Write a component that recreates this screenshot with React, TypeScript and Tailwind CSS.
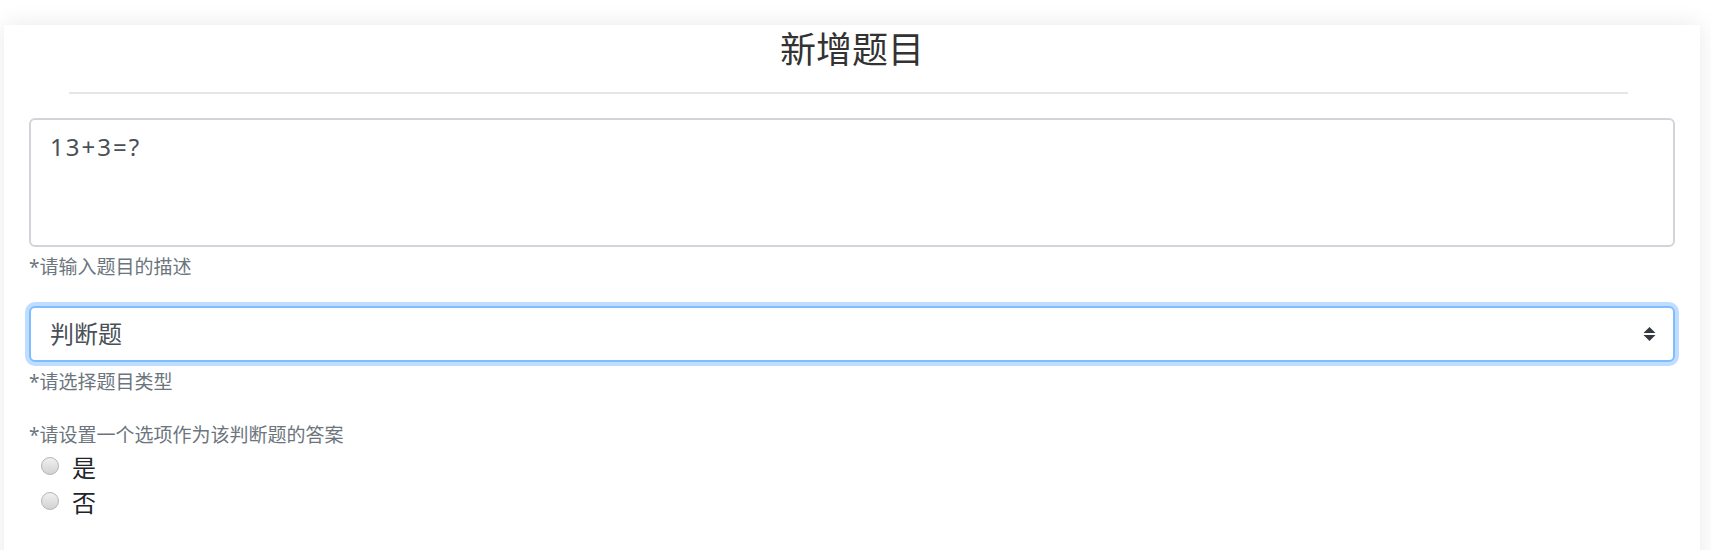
import React, { useState } from 'react';

const FONT = "font-['Noto_Sans','Noto_Sans_CJK_SC',sans-serif]";

const Radio: React.FC<{ label: string; checked: boolean; onChange: () => void }> = ({ label, checked, onChange }) => (
  <label className="flex items-center h-[35px] cursor-pointer">
    <span
      onClick={onChange}
      className="w-[18px] h-[18px] mb-[6px] rounded-full border border-[#b5b5b5] bg-gradient-to-b from-[#f0f0f0] to-[#d2d2d2] flex items-center justify-center mr-[13px]"
    >
      {checked && <span className="w-[8px] h-[8px] rounded-full bg-[#333]" />}
    </span>
    <span className="text-[24px] text-[#212529] leading-[35px] -mt-[2px]">{label}</span>
  </label>
);

export default function App() {
  const [desc, setDesc] = useState('13+3=?');
  const [type, setType] = useState('判断题');
  const [answer, setAnswer] = useState<string | null>(null);

  return (
    <div className={`min-h-[550px] bg-white pt-[25px] pl-[4px] pr-[11px] ${FONT}`}>
      <div className="bg-white shadow-[0_0_22px_rgba(0,0,0,0.09)] px-[25px] pb-[80px]">
        {/* Header */}
        <h4 className="text-center text-[36px] leading-[43px] pt-[3px] text-[#333] font-normal">新增题目</h4>
        <div className="ml-[40px] mr-[47px] mt-[21px] border-t-2 border-[#e6e6e6]" />

        {/* Description */}
        <div className="mt-[24px] mb-[24px]">
          <textarea
            rows={3}
            value={desc}
            onChange={(e) => setDesc(e.target.value)}
            className="block w-full h-[129px] resize-none border-2 border-[#d1d5da] rounded-[6px] px-[19px] py-[9px] text-[24px] leading-[36px] tracking-[2px] text-[#495057] outline-none"
          />
          <div className="mt-[6px] text-[19px] leading-[29px] text-[#6c757d]">*请输入题目的描述</div>
        </div>

        {/* Type */}
        <div className="mb-[24px]">
          <div className="relative">
            <select
              value={type}
              onChange={(e) => setType(e.target.value)}
              className="appearance-none block w-full h-[56px] border-2 border-[#80bdff] rounded-[6px] px-[19px] text-[24px] text-[#495057] bg-white outline-none shadow-[0_0_0_4px_rgba(0,123,255,0.25)]"
            >
              <option>单选题</option>
              <option>多选题</option>
              <option>判断题</option>
            </select>
            <svg className="absolute right-[19px] top-[21px] pointer-events-none" width="13" height="14" viewBox="0 0 13 14">
              <path d="M6.5 0 L12.5 6 L0.5 6 Z" fill="#343a40" />
              <path d="M6.5 14 L12.5 8 L0.5 8 Z" fill="#343a40" />
            </svg>
          </div>
          <div className="mt-[6px] text-[19px] leading-[29px] text-[#6c757d]">*请选择题目类型</div>
        </div>

        {/* Answer */}
        <div>
          <div className="text-[19px] leading-[29px] text-[#6c757d]">*请设置一个选项作为该判断题的答案</div>
          <div className="pl-[12px] pt-[1px]">
            <Radio label="是" checked={answer === '是'} onChange={() => setAnswer('是')} />
            <Radio label="否" checked={answer === '否'} onChange={() => setAnswer('否')} />
          </div>
        </div>
      </div>
    </div>
  );
}
